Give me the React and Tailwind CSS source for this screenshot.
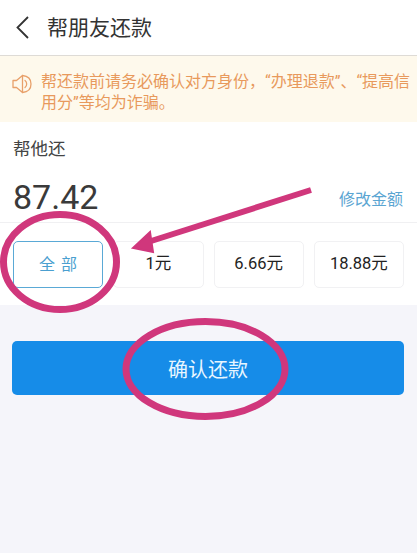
const font = { fontFamily: '"Noto Sans CJK SC", Roboto, sans-serif' };
const latinFirst = { fontFamily: 'Roboto, "Noto Sans CJK SC", sans-serif' };

function Speaker() {
  return (
    <svg width="20" height="20" viewBox="0 0 20 20" fill="none" stroke="#e8a06a" strokeWidth="1.3" strokeLinejoin="round" className="shrink-0">
      <path d="M1 6.500h3.500L10.500 1.500v17l-6-5H1z" />
      <path d="M13 6.500a4.500 4.500 0 0 1 0 7" strokeLinecap="round" />
      <path d="M10.500 1.500c5.500 .5 8.500 4 8.500 8.500s-3 8-8.500 8.500" strokeLinecap="round" />
    </svg>
  );
}

function AmountButton({ label, active }) {
  return (
    <button
      className={
        active
          ? 'flex-1 basis-0 min-w-0 h-[47px] rounded-[5px] border border-[#5aa9d6] text-[16px] tracking-[6px] indent-[6px] text-[#4a9fd0]'
          : 'flex-1 basis-0 min-w-0 h-[47px] rounded-[5px] border border-[#f1f1f3] text-[16.500px] text-[#222]'
      }
      style={latinFirst}
    >
      {label}
    </button>
  );
}

export default function App() {
  return (
    <div className="relative w-[417px] h-[553px] overflow-hidden bg-[#f5f5fa]" style={font}>
      <div className="flex h-[56px] items-center border-b border-[#dedbd6] bg-white pb-[2px] pl-[15px]">
        <svg width="14" height="24" viewBox="0 0 14 24" fill="none" stroke="#333" strokeWidth="1.8">
          <path d="M13 2 2.500 12.500 13 23" />
        </svg>
        <h1 className="ml-[18px] text-[21px] font-normal text-[#333]">帮朋友还款</h1>
      </div>

      <div className="flex h-[66px] items-start gap-[9px] bg-[#fef9ec] pl-[12px] pt-[15px]">
        <div className="pt-[3px]">
          <Speaker />
        </div>
        <p className="w-[372px] text-[16px] leading-[21px] text-[#e8995c]" style={latinFirst}>
          帮还款前请务必确认对方身份，“办理退款”、“提高信用分”等均为诈骗。
        </p>
      </div>

      <div className="h-[183px] bg-white">
        <div className="px-[13px] pt-[13px] text-[17.500px] leading-[26px] text-[#444]">帮他还</div>
        <div className="flex h-[62px] items-end justify-between border-b border-[#f0f0f2] pl-[13px] pr-[14px] pb-[3px]">
          <span className="text-[34px] leading-[44px] text-[#3a3a3a]" style={latinFirst}>
            87.42
          </span>
          <span className="pb-[9px] text-[16px] leading-[24px] text-[#5aa5d2]">修改金额</span>
        </div>
        <div className="flex gap-[10px] px-[13px] pt-[18px]">
          <AmountButton label="全部" active />
          <AmountButton label="1元" />
          <AmountButton label="6.66元" />
          <AmountButton label="18.88元" />
        </div>
      </div>

      <div className="pl-[12px] pr-[13px] pt-[36px]">
        <button className="h-[54px] w-full rounded-[5px] bg-[#168ce8] pt-[1px] text-[20px] text-[#e8f6ff]">确认还款</button>
      </div>

      <svg className="absolute inset-0 pointer-events-none" width="417" height="553" fill="none" stroke="#d0377c" strokeWidth="7">
        <ellipse cx="60" cy="262" rx="56.500" ry="47.500" />
        <ellipse cx="205.500" cy="369" rx="79.500" ry="47.500" />
        <path d="M311 190 148 242" strokeWidth="6" />
        <path d="M133 248 150 232 153 252z" fill="#d0377c" strokeWidth="2" />
      </svg>
    </div>
  );
}
